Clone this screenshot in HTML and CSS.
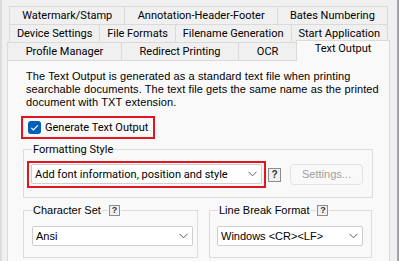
FILE: index.html
```html
<!DOCTYPE html>
<html lang="en">
<head>
    <meta charset="UTF-8">
    <meta name="viewport" content="width=device-width, initial-scale=1.0">
    <title>Text Output</title>
    <link rel="stylesheet" href="styles.css">
</head>
<body>
    <div class="window">
        <div class="tabs">
            <div class="tab-row">
                <div class="tab">Watermark/Stamp</div>
                <div class="tab">Annotation-Header-Footer</div>
                <div class="tab">Bates Numbering</div>
            </div>
            <div class="tab-row">
                <div class="tab">Device Settings</div>
                <div class="tab">File Formats</div>
                <div class="tab">Filename Generation</div>
                <div class="tab">Start Application</div>
            </div>
            <div class="tab-row front">
                <div class="tab">Profile Manager</div>
                <div class="tab">Redirect Printing</div>
                <div class="tab">OCR</div>
                <div class="tab selected">Text Output</div>
            </div>
        </div>

        <div class="panel">
            <p class="desc">
                The Text Output is generated as a standard text file when printing<br>
                searchable documents. The text file gets the same name as the printed<br>
                document with TXT extension.
            </p>

            <div class="highlight check-box">
                <span class="checkbox">
                    <svg width="13" height="13" viewBox="0 0 13 13">
                        <path d="M3.2 6.8 L5.4 9 L9.8 4.3" fill="none" stroke="#fff" stroke-width="1.2"/>
                    </svg>
                </span>
                <span class="check-label">Generate Text Output</span>
            </div>

            <fieldset class="group formatting">
                <legend class="seg">Formatting Style</legend>
                <div class="format-row">
                    <div class="highlight combo-box">
                        <div class="combo wide">
                            <span class="seg">Add font information, position and style</span>
                            <svg class="chevron" width="9" height="6" viewBox="0 0 9 6">
                                <path d="M0.5 0.8 L4.5 4.8 L8.5 0.8" fill="none" stroke="#5a5a5a" stroke-width="1"/>
                            </svg>
                        </div>
                    </div>
                    <span class="help">?</span>
                    <div class="button disabled">Settings...</div>
                </div>
            </fieldset>

            <div class="bottom-groups">
                <fieldset class="group charset">
                    <legend><span>Character Set</span><span class="rule"></span><span class="help small">?</span></legend>
                    <div class="combo">
                        <span>Ansi</span>
                        <svg class="chevron" width="9" height="6" viewBox="0 0 9 6">
                            <path d="M0.5 0.8 L4.5 4.8 L8.5 0.8" fill="none" stroke="#5a5a5a" stroke-width="1"/>
                        </svg>
                    </div>
                </fieldset>
                <fieldset class="group linebreak">
                    <legend><span>Line Break Format</span><span class="rule"></span><span class="help small">?</span></legend>
                    <div class="combo">
                        <span>Windows &lt;CR&gt;&lt;LF&gt;</span>
                        <svg class="chevron" width="9" height="6" viewBox="0 0 9 6">
                            <path d="M0.5 0.8 L4.5 4.8 L8.5 0.8" fill="none" stroke="#5a5a5a" stroke-width="1"/>
                        </svg>
                    </div>
                </fieldset>
            </div>
        </div>
    </div>
</body>
</html>
```

FILE: styles.css
```css
body {
    margin: 0;
    width: 399px;
    height: 261px;
    overflow: hidden;
    background-color: #f0f0f0;
    font-family: "Liberation Sans", Arial, sans-serif;
    font-size: 11px;
    color: #000;
}
.window {
    box-sizing: border-box;
    height: 261px;
    border-left: 2px solid #dcdcdc;
    border-right: 2px solid #a2a2ac;
    padding: 6px 7px 0 5px;
}
.seg,
.tab,
.check-label {
    font-family: Roboto, "Noto Sans", sans-serif;
    font-size: 11px;
}
.tab-row {
    display: flex;
    height: 18px;
    margin: 0 2px;
}
.tab-row.front {
    margin: 0;
}
.tab {
    flex: 1 1 auto;
    box-sizing: border-box;
    height: 18px;
    line-height: 17px;
    text-align: center;
    padding: 0 4px;
    border: 1px solid #dadada;
    border-bottom: none;
    margin-right: -1px;
    white-space: nowrap;
}
.tab:last-child {
    margin-right: 0;
}
.tab.selected {
    position: relative;
    z-index: 1;
    height: 21px;
    margin-top: -2px;
    line-height: 16px;
    background-color: #f9f9f9;
}
.panel {
    box-sizing: border-box;
    height: 202px;
    background-color: #f9f9f9;
    border: 1px solid #dadada;
    padding: 0 17px 0 15px;
}
.desc {
    margin: 9px 0 0 3px;
    font-family: "Liberation Sans", Arial, sans-serif;
    font-size: 11px;
    letter-spacing: 0.1px;
    line-height: 13px;
    white-space: nowrap;
}
.highlight {
    border: 2px solid #e3161f;
    box-sizing: border-box;
}
.check-box {
    display: inline-flex;
    align-items: center;
    margin: 7px 0 0 -2px;
    width: 134px;
    height: 23px;
    padding-left: 5px;
    gap: 4px;
}
.checkbox {
    display: block;
    width: 13px;
    height: 13px;
    border-radius: 3px;
    background-color: #005fb8;
}
.checkbox svg {
    display: block;
}
.group {
    border: 1px solid #dcdcdc;
    margin: 0;
    padding: 0;
    min-width: 0;
}
.group legend {
    margin-left: 8px;
    padding: 0 1px;
    line-height: 13px;
}
.formatting {
    margin-top: 4px;
    width: 350px;
    box-sizing: border-box;
    height: 55px;
}
.format-row {
    display: flex;
    align-items: center;
    margin: 5px 0 0 3px;
}
.combo-box {
    width: 239px;
    height: 27px;
    padding: 1px 2px;
}
.combo {
    box-sizing: border-box;
    display: flex;
    align-items: center;
    justify-content: space-between;
    height: 20px;
    background-color: #fff;
    border: 1px solid #cfcfcf;
    border-radius: 2px;
    padding: 0 4px 0 3px;
}
.chevron {
    display: block;
}
.help {
    display: inline-block;
    box-sizing: border-box;
    width: 13px;
    height: 14px;
    border: 1px solid #8c8c8c;
    background-color: #f0f0f0;
    font-family: "Liberation Sans", Arial, sans-serif;
    font-size: 10px;
    font-weight: bold;
    line-height: 12px;
    text-align: center;
    color: #333;
}
.help.small {
    width: 11px;
    height: 11px;
    line-height: 9px;
    font-size: 9px;
}
.format-row .help {
    margin-left: 2px;
}
.button {
    box-sizing: border-box;
    width: 73px;
    height: 21px;
    margin-left: 9px;
    border: 1px solid #e3e3e3;
    border-radius: 4px;
    background-color: #f9f9f9;
    text-align: center;
    line-height: 19px;
}
.button.disabled {
    color: #a0a0a0;
}
.bottom-groups {
    display: flex;
    gap: 11px;
    margin-top: 6px;
}
.bottom-groups .group {
    height: 54px;
    box-sizing: border-box;
}
.bottom-groups legend {
    display: flex;
    align-items: center;
    padding: 0 1px 0 1px;
}
.rule {
    width: 6px;
    height: 1px;
    margin: 0 1px;
    background-color: #dcdcdc;
}
.charset {
    width: 175px;
}
.charset .combo {
    margin: 9px 4px 0 8px;
}
.linebreak {
    width: 163px;
}
.linebreak .combo {
    margin: 9px 8px 0 7px;
}
```
